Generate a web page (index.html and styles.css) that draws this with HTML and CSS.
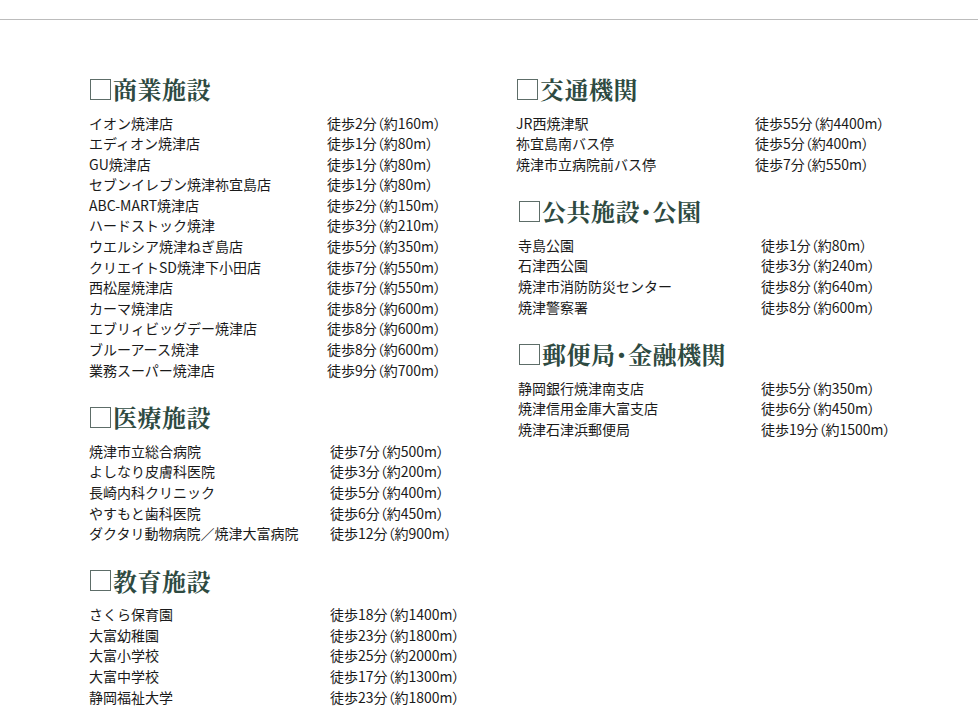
FILE: index.html
```html
<!DOCTYPE html>
<html lang="ja">
<head>
<meta charset="utf-8">
<link rel="stylesheet" href="styles.css">
</head>
<body>
<div class="rule"></div>
<main class="cols">
  <div class="col col-left">
    <section class="sec">
      <h2 class="head"><span class="box"></span>商業施設</h2>
      <dl class="list w238">
        <dt>イオン焼津店</dt><dd>徒歩2分（約160m）</dd>
        <dt>エディオン焼津店</dt><dd>徒歩1分（約80m）</dd>
        <dt>GU焼津店</dt><dd>徒歩1分（約80m）</dd>
        <dt>セブンイレブン焼津祢宜島店</dt><dd>徒歩1分（約80m）</dd>
        <dt>ABC-MART焼津店</dt><dd>徒歩2分（約150m）</dd>
        <dt>ハードストック焼津</dt><dd>徒歩3分（約210m）</dd>
        <dt>ウエルシア焼津ねぎ島店</dt><dd>徒歩5分（約350m）</dd>
        <dt>クリエイトSD焼津下小田店</dt><dd>徒歩7分（約550m）</dd>
        <dt>西松屋焼津店</dt><dd>徒歩7分（約550m）</dd>
        <dt>カーマ焼津店</dt><dd>徒歩8分（約600m）</dd>
        <dt>エブリィビッグデー焼津店</dt><dd>徒歩8分（約600m）</dd>
        <dt>ブルーアース焼津</dt><dd>徒歩8分（約600m）</dd>
        <dt>業務スーパー焼津店</dt><dd>徒歩9分（約700m）</dd>
      </dl>
    </section>
    <section class="sec">
      <h2 class="head"><span class="box"></span>医療施設</h2>
      <dl class="list w241">
        <dt>焼津市立総合病院</dt><dd>徒歩7分（約500m）</dd>
        <dt>よしなり皮膚科医院</dt><dd>徒歩3分（約200m）</dd>
        <dt>長崎内科クリニック</dt><dd>徒歩5分（約400m）</dd>
        <dt>やすもと歯科医院</dt><dd>徒歩6分（約450m）</dd>
        <dt>ダクタリ動物病院／焼津大富病院</dt><dd>徒歩12分（約900m）</dd>
      </dl>
    </section>
    <section class="sec">
      <h2 class="head"><span class="box"></span>教育施設</h2>
      <dl class="list w241">
        <dt>さくら保育園</dt><dd>徒歩18分（約1400m）</dd>
        <dt>大富幼稚園</dt><dd>徒歩23分（約1800m）</dd>
        <dt>大富小学校</dt><dd>徒歩25分（約2000m）</dd>
        <dt>大富中学校</dt><dd>徒歩17分（約1300m）</dd>
        <dt>静岡福祉大学</dt><dd>徒歩23分（約1800m）</dd>
      </dl>
    </section>
  </div>
  <div class="col col-right">
    <section class="sec">
      <h2 class="head"><span class="box"></span>交通機関</h2>
      <dl class="list w239">
        <dt>JR西焼津駅</dt><dd>徒歩55分（約4400m）</dd>
        <dt>祢宜島南バス停</dt><dd>徒歩5分（約400m）</dd>
        <dt>焼津市立病院前バス停</dt><dd>徒歩7分（約550m）</dd>
      </dl>
    </section>
    <section class="sec shift">
      <h2 class="head"><span class="box"></span>公共施設・公園</h2>
      <dl class="list w243">
        <dt>寺島公園</dt><dd>徒歩1分（約80m）</dd>
        <dt>石津西公園</dt><dd>徒歩3分（約240m）</dd>
        <dt>焼津市消防防災センター</dt><dd>徒歩8分（約640m）</dd>
        <dt>焼津警察署</dt><dd>徒歩8分（約600m）</dd>
      </dl>
    </section>
    <section class="sec shift">
      <h2 class="head"><span class="box"></span>郵便局・金融機関</h2>
      <dl class="list w243">
        <dt>静岡銀行焼津南支店</dt><dd>徒歩5分（約350m）</dd>
        <dt>焼津信用金庫大富支店</dt><dd>徒歩6分（約450m）</dd>
        <dt>焼津石津浜郵便局</dt><dd>徒歩19分（約1500m）</dd>
      </dl>
    </section>
  </div>
</main>
</body>
</html>
```
FILE: styles.css
```css
html, body {
  margin: 0;
  padding: 0;
  background: #fff;
}
body {
  width: 980px;
  height: 725px;
  overflow: hidden;
  font-family: "Noto Sans CJK JP", "Noto Sans", sans-serif;
  color: #1a1a1a;
}
.rule {
  margin-top: 19px;
  width: 978px;
  height: 1px;
  background: #bcbcbc;
}
.cols {
  display: grid;
  grid-template-columns: 427px 400px;
  padding: 54px 0 0 89px;
}
.sec + .sec {
  margin-top: 22px;
}
.head {
  margin: 0 0 8.5px;
  height: 30px;
  display: flex;
  align-items: center;
  font-family: "Noto Serif CJK JP", "Noto Serif CJK SC", "Noto Sans CJK JP", serif;
  font-weight: 700;
  font-size: 24px;
  line-height: 30px;
  color: #2e4a41;
  font-feature-settings: "palt";
  letter-spacing: 0.5px;
}
.box {
  box-sizing: border-box;
  width: 21px;
  height: 21px;
  border: 1.3px solid #5d6d68;
  margin: 0 2px 0 1px;
  flex: none;
}
.list {
  display: grid;
  margin: 0;
  font-size: 14px;
  line-height: 20.6px;
}
.list dt, .list dd {
  margin: 0;
  white-space: nowrap;
}
.list dd {
  font-feature-settings: "palt";
}
.w238 { grid-template-columns: 238px auto; }
.w239 { grid-template-columns: 239px auto; }
.w241 { grid-template-columns: 241px auto; }
.w243 { grid-template-columns: 243px auto; }
.shift {
  padding-left: 2px;
}
```
